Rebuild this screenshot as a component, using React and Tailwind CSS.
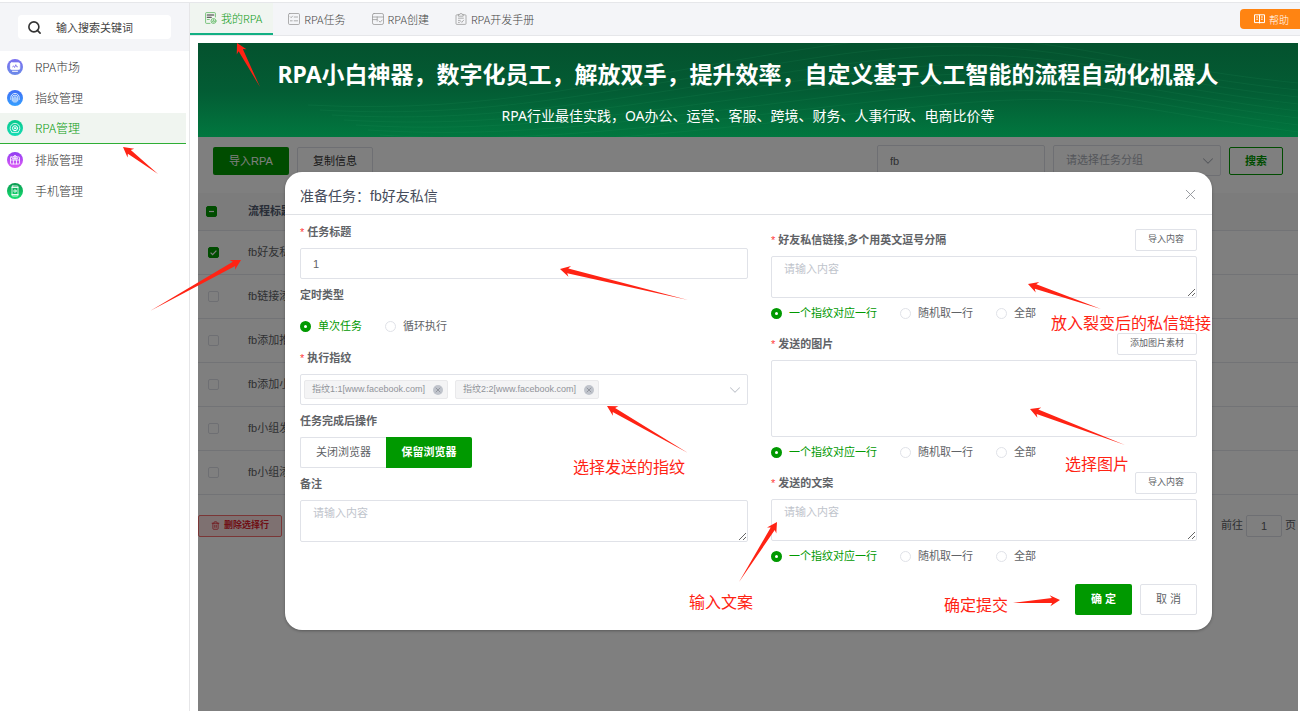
import { useState } from "react";
import { ChevronDown, Search, Trash2, X } from "lucide-react";

const MENU = [
  { label: "RPA市场", icon: "market", from: "#7b6ff0", to: "#6a8be8" },
  { label: "指纹管理", icon: "finger", from: "#3f6df5", to: "#35a0ff" },
  { label: "RPA管理", icon: "rpa", from: "#08c98c", to: "#16dcb4", active: true },
  { label: "排版管理", icon: "layout", from: "#8f3df2", to: "#e05cf5" },
  { label: "手机管理", icon: "phone", from: "#0a9a52", to: "#14e070" },
];

const TABS = [
  { label: "我的RPA", icon: "mine", active: true },
  { label: "RPA任务", icon: "task" },
  { label: "RPA创建", icon: "create" },
  { label: "RPA开发手册", icon: "manual" },
];

const ROWS = ["fb好友私信", "fb链接添加", "fb添加推荐", "fb添加小组", "fb小组发帖", "fb小组添加"];

const RANGE_OPTIONS = ["一个指纹对应一行", "随机取一行", "全部"];

const ARROWS = [
  { tail: [260, 87], tip: [237, 43] },
  { tail: [158, 174], tip: [123, 147] },
  { tail: [150, 311], tip: [241, 260] },
  { tail: [688, 300], tip: [560, 269] },
  { tail: [688, 453], tip: [607, 406] },
  { tail: [1101, 309], tip: [1028, 284] },
  { tail: [1125, 445], tip: [1030, 409] },
  { tail: [739, 582], tip: [777, 522] },
  { tail: [1013, 603], tip: [1060, 600] },
];

// Thin tail that widens up to a barbed head
function arrowPoints([x1, y1], [x2, y2]) {
  const len = Math.hypot(x2 - x1, y2 - y1);
  const ux = (x2 - x1) / len;
  const uy = (y2 - y1) / len;
  const at = (back, side) => `${x2 - ux * back - uy * side},${y2 - uy * back + ux * side}`;
  return [at(0, 0), at(10, 5.5), at(8, 2.4), at(len, 0), at(8, -2.4), at(10, -5.5)].join(" ");
}

function MenuIcon({ name, from, to }) {
  return (
    <svg viewBox="0 0 16 16" className="size-4 shrink-0" aria-hidden="true">
      <defs>
        <linearGradient id={`menu-${name}`} x1="0" y1="0" x2="0" y2="1">
          <stop offset="0" stopColor={from} />
          <stop offset="1" stopColor={to} />
        </linearGradient>
      </defs>
      <circle cx="8" cy="8" r="8" fill={`url(#menu-${name})`} />
      <g fill="none" stroke="#fff" strokeWidth="0.8" strokeLinecap="round">
        {name === "market" && (
          <>
            <rect x="3.4" y="3.8" width="9.4" height="6.8" rx="1.4" fill="#fff" />
            <path d="M5.5 12.3h5" strokeWidth="1" />
            <path d="M5.6 7.8l1 -0.9 1 1.6 1.2-2.8 0.9 2.1h0.8" stroke="#7468e6" />
          </>
        )}
        {name === "finger" && (
          <>
            <path d="M3.8 9.5V7.6a4.2 4.2 0 0 1 8.4 0v2" />
            <path d="M5.3 11V7.8a2.7 2.7 0 0 1 5.4 0V11" />
            <path d="M6.8 12V8a1.2 1.2 0 0 1 2.4 0v4M8 8.3v4" />
          </>
        )}
        {name === "rpa" && (
          <>
            <circle cx="8" cy="8.2" r="2.5" strokeWidth="1" />
            <circle cx="8" cy="8.2" r="0.7" fill="#fff" />
            <path d="M4.6 11.8a4.9 4.9 0 1 1 6.8 0M4.8 12.4h6.4" />
          </>
        )}
        {name === "layout" && (
          <>
            <rect x="3.5" y="5" width="9" height="7" rx="0.6" />
            <path d="M3.5 8h9M6.4 8v4M9.5 8v4M5.4 6.4h5.2M8 3.4V8M6 5l2-1.6L10 5" />
          </>
        )}
        {name === "phone" && (
          <>
            <rect x="5" y="3" width="6" height="10" rx="0.8" />
            <path d="M5 4.4h6M5 11.6h6" strokeWidth="1" />
            <circle cx="8" cy="8" r="1.2" />
          </>
        )}
      </g>
    </svg>
  );
}

function TabIcon({ name }) {
  return (
    <svg
      viewBox="0 0 12 12"
      className="size-3 shrink-0"
      fill="none"
      stroke={name === "mine" ? "#5cb860" : "#9a9a9a"}
      strokeWidth="0.8"
      strokeLinecap="round"
      strokeLinejoin="round"
      aria-hidden="true"
    >
      {name === "mine" && (
        <>
          <path d="M10.4 5V1.4a.8.8 0 0 0-.8-.8H1.4a.8.8 0 0 0-.8.8v9.2a.8.8 0 0 0 .8.8H5" />
          <path d="M2.3 3h6.4M2.3 5.2h4" stroke="#333" strokeWidth="1.1" />
          <path d="M2.3 7.5h2" />
          <circle cx="8.5" cy="9" r="2.5" />
          <path d="M7.3 9a1.2 1.2 0 1 0 2.4 0M8.5 7.6V9" />
        </>
      )}
      {name === "task" && (
        <>
          <rect x="0.5" y="0.5" width="11" height="11" rx="1.2" />
          <path d="M2.3 3.8l.9.9 1.3-1.6M6.2 4h3.4M2.4 7.8h1.8M6.2 7.8h3.4" />
        </>
      )}
      {name === "create" && (
        <>
          <rect x="0.5" y="0.5" width="11" height="11" rx="1.6" />
          <path d="M.5 4h11M.6 6.6h4.6V4M5.2 6.6v1.6M7 8l1.2 1.2 2-2.2" />
        </>
      )}
      {name === "manual" && (
        <>
          <path d="M3.6 1.8H1.8a.8.8 0 0 0-.8.8v8a.8.8 0 0 0 .8.8h8.4a.8.8 0 0 0 .8-.8v-8a.8.8 0 0 0-.8-.8H8.4" />
          <path d="M3.8 1.4h1.2a1 1 0 0 1 2 0h1.2v1.8H3.8zM3.4 5.2h5M3.4 7.4h1.8M3.4 9.4h1M5.8 8.4l1 1 1.8-2.2" />
        </>
      )}
    </svg>
  );
}

function Sidebar() {
  return (
    <aside className="w-[190px] shrink-0 border-r border-[#e6e6e8] bg-white font-[family-name:'Noto_Sans_CJK_SC',sans-serif]">
      <div className="flex h-12 items-center bg-[#f4f5f8] px-[18px]">
        <label className="flex h-6 w-full items-center gap-[14px] rounded bg-white pl-[9px]">
          <Search size={15} strokeWidth={2.6} className="shrink-0 text-[#333]" />
          <input
            type="search"
            aria-label="搜索"
            placeholder="输入搜索关键词"
            className="w-full min-w-0 bg-transparent text-[11px] outline-none placeholder:text-[#444]"
          />
        </label>
      </div>
      <nav className="flex flex-col pr-[3px]">
        {MENU.map((item) => (
          <a
            key={item.label}
            href="#"
            className={`flex h-[31px] items-center gap-3 pl-[7px] text-xs font-light ${
              item.active
                ? "border-b border-[#2eae35] bg-[#f0f5f0] text-[#0b9b12]"
                : "text-[#333]"
            }`}
          >
            <MenuIcon name={item.icon} from={item.from} to={item.to} />
            {item.label}
          </a>
        ))}
      </nav>
    </aside>
  );
}

function TopBar() {
  return (
    <header className="flex h-[33px] items-center border-b border-[#e6e7ea] bg-[#f4f5f8] font-[family-name:'Noto_Sans_CJK_SC',sans-serif]">
      <nav className="flex h-full">
        {TABS.map((tab) => (
          <a
            key={tab.label}
            href="#"
            className={`flex items-center gap-1 pr-[11px] pl-[15px] text-[11px] font-light ${
              tab.active
                ? "border-b-2 border-[#12b083] bg-[#f0f5f0] text-[#0b9b12]"
                : "text-[#444]"
            }`}
          >
            <TabIcon name={tab.icon} />
            {tab.label}
          </a>
        ))}
      </nav>
      <button className="ml-auto flex h-5 items-center gap-1 rounded-l bg-[#ff8412] pr-[11px] pl-[14px] text-[10px] font-light text-white">
        <svg
          viewBox="0 0 11 10"
          className="h-[10px] w-[11px]"
          fill="none"
          stroke="currentColor"
          strokeWidth="1"
          aria-hidden="true"
        >
          <path d="M.5.8h10v7.8h-10zM5.5.8v8.6M2.2 3h1.8M2.2 5.2h1.8M7 3h1.8M7 5.2h1.8" />
        </svg>
        帮助
      </button>
    </header>
  );
}

function Banner() {
  return (
    <div className="relative flex h-[94px] flex-col items-center overflow-hidden bg-linear-to-b from-[#04522e] via-[#035c34] to-[#01773f] text-white font-[family-name:'Noto_Sans','Noto_Sans_CJK_SC',sans-serif]">
      <svg
        viewBox="0 0 1100 94"
        preserveAspectRatio="none"
        className="absolute inset-0 size-full"
        fill="none"
        stroke="#2fa86a"
        strokeOpacity="0.12"
        aria-hidden="true"
      >
        {[0, 1, 2, 3, 4, 5, 6, 7].map((i) => (
          <path
            key={i}
            d={`M${110 + i * 12} ${62 + i * 5}C${300 + i * 6} ${72 + i * 5} ${420 + i * 8} ${34 + i * 8} ${620 + i * 10} ${4 + i * 9}S900 ${20 + i * 6} 1100 ${40 + i * 7}`}
          />
        ))}
      </svg>
      <h1 className="relative mt-[14px] text-[23px] leading-[34px] font-bold whitespace-nowrap">
        RPA小白神器，数字化员工，解放双手，提升效率，自定义基于人工智能的流程自动化机器人
      </h1>
      <p className="relative mt-[14px] text-sm leading-[22px] whitespace-nowrap">
        RPA行业最佳实践，OA办公、运营、客服、跨境、财务、人事行政、电商比价等
      </p>
    </div>
  );
}

function Checkbox({ checked, onChange, partial, label }) {
  return (
    <span className="relative block size-[11px]">
      <input
        type="checkbox"
        aria-label={label}
        checked={checked}
        onChange={onChange}
        className="block size-[11px] appearance-none rounded-xs border border-[#dcdfe6] bg-white checked:border-[#090] checked:bg-[#090]"
      />
      {checked && (
        <svg
          viewBox="0 0 11 11"
          className="pointer-events-none absolute inset-0"
          fill="none"
          stroke="#fff"
          strokeWidth="1.2"
          aria-hidden="true"
        >
          <path d={partial ? "M3 5.5h5" : "M2.6 5.6l2 2 3.8-4"} />
        </svg>
      )}
    </span>
  );
}

function TaskList() {
  const [selected, setSelected] = useState([0]);
  const toggle = (i) =>
    setSelected((s) => (s.includes(i) ? s.filter((n) => n !== i) : [...s, i]));

  return (
    <div>
      <div className="flex h-[56px] items-start gap-2 px-[15px] pt-2">
        <button className="mt-0.5 h-7 w-[76px] rounded-xs bg-[#090] text-[11px] text-white">导入RPA</button>
        <button className="mt-0.5 h-7 w-[76px] rounded-xs border border-[#dcdfe6] text-[11px] text-[#333]">
          复制信息
        </button>
        <input
          aria-label="流程标题"
          defaultValue="fb"
          className="ml-auto h-[31px] w-[168px] rounded-xs border border-[#dcdfe6] px-3 text-[11px] text-[#606266]"
        />
        <div className="relative">
          <select
            aria-label="任务分组"
            className="h-[31px] w-[168px] appearance-none rounded-xs border border-[#dcdfe6] px-3 text-[11px] text-[#a9adb6]"
          >
            <option>请选择任务分组</option>
          </select>
          <ChevronDown
            size={18}
            strokeWidth={1.4}
            className="pointer-events-none absolute top-[7px] right-1 text-[#a9adb6]"
          />
        </div>
        <button className="mt-0.5 h-7 w-[54px] rounded-xs border border-[#090] text-[11px] font-bold text-[#090]">
          搜索
        </button>
      </div>

      <table className="w-full table-fixed border-collapse text-left text-[11px] text-[#606266]">
        <thead>
          <tr className="h-[37px] border-b border-[#e4e7ed] bg-[#f8f8f9]">
            <th className="w-[50px] pl-2">
              <Checkbox
                label="全选"
                partial={selected.length < ROWS.length}
                checked={selected.length > 0}
                onChange={() => setSelected(selected.length ? [] : ROWS.map((_, i) => i))}
              />
            </th>
            <th className="font-bold text-[#515a6e]">流程标题</th>
          </tr>
        </thead>
        <tbody>
          {ROWS.map((row, i) => (
            <tr key={row} className="h-11 border-b border-[#e4e7ed]">
              <td className="pl-[10px]">
                <Checkbox label={row} checked={selected.includes(i)} onChange={() => toggle(i)} />
              </td>
              <td>{row}</td>
            </tr>
          ))}
        </tbody>
      </table>

      <div className="flex items-center justify-between pt-5 pr-0.5">
        <button className="flex h-[22px] w-[84px] items-center justify-center gap-1 rounded-xs border border-[#f56c6c] bg-[#fde2e2] text-[9px] font-bold text-[#e0202c]">
          <Trash2 size={9} />
          删除选择行
        </button>
        <label className="flex items-center gap-[3px] text-[11px] text-[#606266]">
          前往
          <input
            defaultValue="1"
            className="h-[22px] w-9 rounded-xs border border-[#dcdfe6] text-center text-[11px]"
          />
          页
        </label>
      </div>
    </div>
  );
}

function RadioRow({ name, options }) {
  const [value, setValue] = useState(options[0]);

  return (
    <div className="flex h-[31px] items-center gap-[23px]">
      {options.map((option) => (
        <label
          key={option}
          className={`flex items-center gap-[7px] text-[11px] whitespace-nowrap ${
            value === option ? "text-[#090]" : "text-[#606266]"
          }`}
        >
          <input
            type="radio"
            name={name}
            checked={value === option}
            onChange={() => setValue(option)}
            className="size-[11px] appearance-none rounded-full border border-[#e0e2e8] bg-white checked:border-4 checked:border-[#090]"
          />
          {option}
        </label>
      ))}
    </div>
  );
}

function FieldLabel({ htmlFor, required, children }) {
  return (
    <label htmlFor={htmlFor} className="flex h-8 items-center gap-[3px] text-[11px] font-bold text-[#606266]">
      {required && <span className="font-normal text-[#ff3b3b]">*</span>}
      {children}
    </label>
  );
}

function TextArea({ id }) {
  return (
    <textarea
      id={id}
      placeholder="请输入内容"
      className="block h-[42px] w-full rounded-xs border border-[#e0e2e8] px-3 py-1 text-[11px] leading-4 outline-none placeholder:text-[#c0c4cc]"
    />
  );
}

function MaterialField({ id, label, action, children }) {
  return (
    <div>
      <div className="mb-[5px] flex h-[22px] items-center justify-between">
        <FieldLabel htmlFor={id} required>
          {label}
        </FieldLabel>
        <button
          type="button"
          className="h-[22px] rounded-xs border border-[#e0e2e8] px-3 text-[9px] text-[#606266]"
        >
          {action}
        </button>
      </div>
      {children}
      <RadioRow name={`${id}-range`} options={RANGE_OPTIONS} />
    </div>
  );
}

function FingerprintSelect({ id }) {
  const [chips, setChips] = useState(["指纹1:1[www.facebook.com]", "指纹2:2[www.facebook.com]"]);

  return (
    <div className="flex h-[31px] items-center gap-[7px] rounded-xs border border-[#e0e2e8] px-[3px]">
      {chips.map((chip) => (
        <span
          key={chip}
          className="flex h-[19px] items-center gap-2 rounded-xs border border-[#e9e9eb] bg-[#f4f4f5] pr-1 pl-[7px] text-[9px] text-[#909399]"
        >
          {chip}
          <button
            type="button"
            aria-label={`移除 ${chip}`}
            onClick={() => setChips(chips.filter((c) => c !== chip))}
            className="flex size-[10px] items-center justify-center rounded-full bg-[#c0c4cc] text-[#7d818a]"
          >
            <X size={8} />
          </button>
        </span>
      ))}
      <button type="button" id={id} aria-label="选择指纹" aria-haspopup="listbox" className="ml-auto">
        <ChevronDown size={18} strokeWidth={1.4} className="text-[#c0c4cc]" />
      </button>
    </div>
  );
}

function TaskDialog() {
  return (
    <div
      role="dialog"
      aria-labelledby="dialog-title"
      className="w-full rounded-[17px] bg-white pb-[15px] shadow-[0_1px_3px_rgba(0,0,0,0.3)]"
    >
      <div className="flex h-[43px] items-center justify-between border-b border-[#dfe1e5] pt-[6px] pr-[13px] pl-[15px]">
        <h2 id="dialog-title" className="text-sm text-[#464c5b]">
          准备任务：fb好友私信
        </h2>
        <button aria-label="关闭" className="pb-1 text-[#909399]">
          <X size={17} strokeWidth={1.3} />
        </button>
      </div>

      <form className="px-[15px]" onSubmit={(e) => e.preventDefault()}>
        <div className="grid grid-cols-[448fr_426fr] gap-[23px]">
          <div className="pt-px">
            <FieldLabel htmlFor="title" required>
              任务标题
            </FieldLabel>
            <input
              id="title"
              defaultValue="1"
              className="block h-[31px] w-full rounded-xs border border-[#e0e2e8] px-3 text-[11px] text-[#606266] outline-none"
            />

            <FieldLabel>定时类型</FieldLabel>
            <RadioRow name="timer" options={["单次任务", "循环执行"]} />

            <FieldLabel htmlFor="fingerprints" required>
              执行指纹
            </FieldLabel>
            <FingerprintSelect id="fingerprints" />

            <FieldLabel>任务完成后操作</FieldLabel>
            <div className="flex h-[31px] text-[11px]">
              <button
                type="button"
                className="w-[86px] rounded-l-xs border border-r-0 border-[#e0e2e8] text-[#606266]"
              >
                关闭浏览器
              </button>
              <button type="button" className="w-[86px] rounded-r-xs bg-[#090] font-bold text-white">
                保留浏览器
              </button>
            </div>

            <FieldLabel htmlFor="remark">备注</FieldLabel>
            <TextArea id="remark" />
          </div>

          <div className="flex flex-col gap-1 pt-[14px]">
            <MaterialField id="links" label="好友私信链接,多个用英文逗号分隔" action="导入内容">
              <TextArea id="links" />
            </MaterialField>
            <MaterialField id="images" label="发送的图片" action="添加图片素材">
              <div id="images" className="h-[77px] rounded-xs border border-[#e0e2e8]" />
            </MaterialField>
            <MaterialField id="copy" label="发送的文案" action="导入内容">
              <TextArea id="copy" />
            </MaterialField>
          </div>
        </div>

        <div className="flex justify-end gap-2 pt-3 text-[11px]">
          <button className="h-[31px] w-[57px] rounded-xs bg-[#090] font-bold text-white">确 定</button>
          <button
            type="button"
            className="h-[31px] w-[57px] rounded-xs border border-[#e0e2e8] text-[#606266]"
          >
            取 消
          </button>
        </div>
      </form>
    </div>
  );
}

// Red guide arrows and captions drawn over the page
function Guide() {
  return (
    <div className="pointer-events-none absolute inset-0 overflow-hidden text-base leading-5 whitespace-nowrap text-[#ff2314]">
      <svg className="absolute inset-0 size-full" fill="currentColor" aria-hidden="true">
        {ARROWS.map(({ tail, tip }) => (
          <polygon key={tip.join()} points={arrowPoints(tail, tip)} />
        ))}
      </svg>
      <span className="absolute top-[458px] left-[573px]">选择发送的指纹</span>
      <span className="absolute top-[314px] left-[1051px]">放入裂变后的私信链接</span>
      <span className="absolute top-[455px] left-[1065px]">选择图片</span>
      <span className="absolute top-[593px] left-[689px]">输入文案</span>
      <span className="absolute top-[596px] left-[944px]">确定提交</span>
    </div>
  );
}

export default function App() {
  return (
    <div className="relative flex min-h-screen flex-col bg-white pt-0.5 font-[family-name:'Liberation_Sans','Noto_Sans_CJK_SC',sans-serif]">
      <div className="flex flex-1 border-t border-[#e6e7ea]">
        <Sidebar />
        <main className="flex min-w-0 flex-1 flex-col">
          <TopBar />
          <div className="mt-[7px] mr-0.5 ml-2 flex flex-1 flex-col">
            <Banner />
            <section className="relative flex-1">
              <TaskList />
              <div className="absolute inset-0 flex items-start bg-black/50 pt-[35px] pr-[86px] pl-[87px]">
                <TaskDialog />
              </div>
            </section>
          </div>
        </main>
      </div>
      <Guide />
    </div>
  );
}
